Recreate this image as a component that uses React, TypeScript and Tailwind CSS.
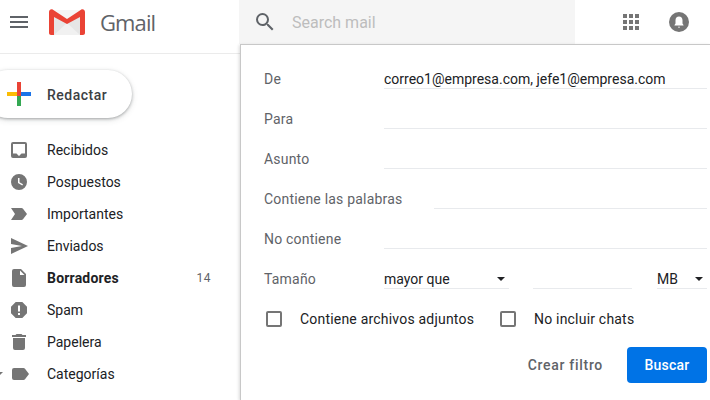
import { ReactNode } from 'react';

const Icon = ({ children }: { children: ReactNode }) => (
  <svg viewBox="0 0 24 24" className="w-6 h-6 fill-[#757575] shrink-0">{children}</svg>
);

const navItems: { label: string; icon: ReactNode; bold?: boolean; count?: string }[] = [
  { label: 'Recibidos', icon: <path d="M6 4h12a2 2 0 0 1 2 2v12a2 2 0 0 1-2 2H6a2 2 0 0 1-2-2V6a2 2 0 0 1 2-2zm0 2v9.500h3.500L12 18l2.500-2.500H18V6H6z" /> },
  { label: 'Pospuestos', icon: <path d="M12 4a8 8 0 1 0 0 16 8 8 0 0 0 0-16zm3.300 11.500L11 13V8h1.500v4.200l3.500 2.100-.7 1.200z" /> },
  { label: 'Importantes', icon: <path d="M4 6h10.500c.6 0 1.100.3 1.500.8l4 5.200-4 5.200c-.4.5-.9.8-1.500.8H4l4-6-4-6z" /> },
  { label: 'Enviados', icon: <path d="M4 20l17-8L4 4v6l11 2-11 2z" /> },
  { label: 'Borradores', bold: true, count: '14', icon: <path d="M14 3H7a2 2 0 0 0-2 2v14a2 2 0 0 0 2 2h10a2 2 0 0 0 2-2V8l-5-5zm-1 6V4.500L17.500 9H13z" /> },
  { label: 'Spam', icon: <path d="M8.700 4h6.600L20 8.700v6.600L15.300 20H8.700L4 15.300V8.700L8.700 4zM11 7.500v6h2v-6h-2zm0 7.500v2h2v-2h-2z" /> },
  { label: 'Papelera', icon: <path d="M6 8h12v10a2 2 0 0 1-2 2H8a2 2 0 0 1-2-2V8zM19 5h-3.500l-1-1h-5l-1 1H5v2h14V5z" /> },
  { label: 'Categorías', icon: <path d="M7 6h9.500c.6 0 1.200.3 1.500.8l4 5.200-4 5.200c-.3.5-.9.8-1.500.8H7a2 2 0 0 1-2-2V8a2 2 0 0 1 2-2z" /> },
];

const Field = ({ label, value, labelWidth = 'w-[120px]' }: { label: string; value?: string; labelWidth?: string }) => (
  <div className="flex h-10 items-end">
    <div className={`${labelWidth} shrink-0 h-5 text-[14px] leading-[20px] tracking-[0.2px] text-[#5f6368]`}>{label}</div>
    <div className="flex-1 h-5 border-b border-[#e8eaed] text-[14px] leading-[20px] text-[#202124]">{value}</div>
  </div>
);

const Select = ({ value, width }: { value: string; width: string }) => (
  <div className={`${width} h-5 border-b border-[#e8eaed] flex justify-between text-[14px] leading-[20px] text-[#202124] shrink-0`}>
    <span>{value}</span>
    <span className="w-0 h-0 mt-[8px] border-x-[4px] border-t-[4px] border-x-transparent border-t-[#202124] mr-[4px]" />
  </div>
);

const Check = ({ label, className }: { label: string; className: string }) => (
  <div className={`flex items-center ${className}`}>
    <span className="w-4 h-4 border-2 border-[#757575] rounded-[2px] ml-[2px] mr-[18px] shrink-0" />
    <span className="text-[14px] tracking-[0.2px] text-[#202124]">{label}</span>
  </div>
);

export default function App() {
  return (
    <div className="relative w-[710px] h-[400px] overflow-hidden bg-white font-['Roboto',sans-serif]">
      <header className="flex items-center h-[54px] border-b border-[#ebebeb] pb-[9px]">
        <div className="ml-[10px] w-[18px] flex flex-col gap-[3px]">
          <span className="h-[2px] bg-[#5f6368]" />
          <span className="h-[2px] bg-[#5f6368]" />
          <span className="h-[2px] bg-[#5f6368]" />
        </div>
        <svg viewBox="0 0 36 26" className="ml-[21px] w-9 h-[26px] shrink-0">
          <path d="M3 1h30v25H3z" fill="#e6e6e6" />
          <path d="M5 26L18 14l13 12z" fill="#f1f1f1" />
          <path d="M3 1h30L18 12z" fill="#f5f5f5" />
          <path d="M0 3c0-2 2-3.500 4-2.300L18 10 32 .7c2-1.200 4 .3 4 2.300v21c0 1.100-.9 2-2 2h-3V8L18 15 5 8v18H2c-1.100 0-2-.9-2-2V3z" fill="#ea4335" />
        </svg>
        <span className="ml-[15px] text-[22px] text-[#5f6368] font-['Open_Sans',sans-serif] tracking-[-0.9px]">Gmail</span>
        <div className="absolute left-[239px] top-0 w-[336px] h-[44px] bg-[#f5f5f5] flex items-center">
          <svg viewBox="0 0 24 24" className="ml-[14px] w-6 h-6 fill-[#5f6368]">
            <path d="M15.500 14h-.79l-.28-.27A6.471 6.471 0 0 0 16 9.500 6.500 6.500 0 1 0 9.500 16c1.610 0 3.090-.59 4.230-1.570l.27.28v.79l5 4.990L20.490 19l-4.990-5zm-6 0C7.010 14 5 11.990 5 9.500S7.010 5 9.500 5 14 7.010 14 9.500 11.990 14 9.500 14z" />
          </svg>
          <span className="ml-[15px] pt-[2px] text-[16px] text-[#bdbdbd]">Search mail</span>
        </div>
        <svg viewBox="0 0 16 16" className="absolute left-[623px] top-[14px] w-4 h-4 fill-[#757575]">
          <path d="M0 0h4v4H0zM6 0h4v4H6zM12 0h4v4h-4zM0 6h4v4H0zM6 6h4v4H6zM12 6h4v4h-4zM0 12h4v4H0zM6 12h4v4H6zM12 12h4v4h-4z" />
        </svg>
        <svg viewBox="0 0 20 20" className="absolute left-[669px] top-[12px] w-5 h-5">
          <circle cx="10" cy="10" r="10" fill="#757575" />
          <path d="M10 4.500c-2.200 0-3.500 1.700-3.500 3.800v3.200L5.500 13v.5h9V13l-1-1.500V8.300c0-2.100-1.300-3.800-3.500-3.800zM9 14.700h2v.8H9z" fill="#fff" />
        </svg>
      </header>

      <aside className="w-[240px] pt-[16px]">
        <div className="ml-[-16px] w-[148px] h-[48px] rounded-full bg-white shadow-[0_1px_3px_rgba(60,64,67,0.4),0_2px_6px_rgba(60,64,67,0.15)] flex items-center">
          <svg viewBox="0 0 24 24" className="ml-[23px] w-6 h-6 shrink-0">
            <path d="M10 0h4v10h-4z" fill="#ea4335" />
            <path d="M14 10h10v4H14z" fill="#1a73e8" />
            <path d="M10 14h4v10h-4z" fill="#34a853" />
            <path d="M0 10h10v4H0z" fill="#fbbc04" />
            <path d="M10 10h4v4h-4z" fill="#ea4335" />
          </svg>
          <span className="ml-[16px] pt-[2px] text-[14px] font-medium tracking-[0.5px] text-[#3c4043]">Redactar</span>
        </div>
        <nav className="mt-[16px]">
          {navItems.map(item => (
            <div key={item.label} className="flex items-center h-8 pl-[7px] pr-[29px] relative">
              <Icon>{item.icon}</Icon>
              <span className={`ml-[16px] flex-1 text-[14px] text-[#202124] ${item.bold ? 'font-bold tracking-[0.2px]' : ''}`}>{item.label}</span>
              {item.count && <span className="text-[12px] tracking-[0.5px] text-[#5f6368]">{item.count}</span>}
              {item.label === 'Categorías' && (
                <span className="absolute left-[-3px] top-[14px] w-0 h-0 border-x-[3px] border-t-[3px] border-x-transparent border-t-[#757575]" />
              )}
            </div>
          ))}
        </nav>
      </aside>

      <section className="absolute left-[240px] top-[44px] w-[470px] h-[356px] bg-white border-t border-l border-[#c8c8c8] shadow-[-1px_1px_3px_rgba(0,0,0,0.15)] pl-[23px] pr-[3px] pt-[4px]">
        <Field label="De" value="correo1@empresa.com, jefe1@empresa.com" />
        <Field label="Para" />
        <Field label="Asunto" />
        <Field label="Contiene las palabras" labelWidth="w-[170px]" />
        <Field label="No contiene" />
        <div className="flex h-10 items-end">
          <div className="w-[120px] shrink-0 h-5 text-[14px] leading-[20px] tracking-[0.2px] text-[#5f6368]">Tamaño</div>
          <Select value="mayor que" width="w-[125px]" />
          <div className="ml-[24px] w-[99px] h-5 border-b border-[#e8eaed] shrink-0" />
          <div className="ml-[25px]"><Select value="MB" width="w-[50px]" /></div>
        </div>
        <div className="flex h-5 mt-[20px] items-center">
          <Check label="Contiene archivos adjuntos" className="w-[234px]" />
          <Check label="No incluir chats" className="" />
        </div>
        <div className="flex justify-end items-center mt-[18px]">
          <span className="text-[14px] font-medium tracking-[0.7px] text-[#5f6368] mr-[24px]">Crear filtro</span>
          <span className="w-[80px] h-9 rounded-[4px] bg-[#0073e6] text-white text-[14px] font-medium tracking-[0.25px] flex items-center justify-center">Buscar</span>
        </div>
      </section>
    </div>
  );
}
